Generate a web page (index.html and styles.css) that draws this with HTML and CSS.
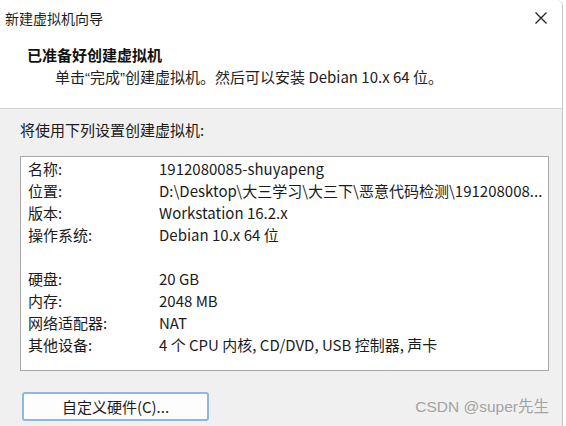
FILE: index.html
```html
<!DOCTYPE html>
<html lang="zh-CN">
<head>
<meta charset="utf-8">
<title>新建虚拟机向导</title>
<link rel="stylesheet" href="styles.css">
</head>
<body>
<div class="window">
  <div class="header">
    <div class="titlebar">
      <span class="title">新建虚拟机向导</span>
      <span class="close" aria-label="关闭">
        <svg width="14" height="14" viewBox="0 0 14 14"><path d="M1.5 1.5 L12.5 12.5 M12.5 1.5 L1.5 12.5" stroke="#222" stroke-width="1.3" fill="none"/></svg>
      </span>
    </div>
    <div class="heading">已准备好创建虚拟机</div>
    <div class="subheading">单击<span class="q">“</span>完成<span class="q">”</span>创建虚拟机。然后可以安装 Debian 10.x 64 位。</div>
  </div>
  <div class="content">
    <div class="intro">将使用下列设置创建虚拟机:</div>
    <div class="listbox">
      <div class="row"><span class="label">名称:</span><span class="value">1912080085-shuyapeng</span></div>
      <div class="row"><span class="label">位置:</span><span class="value">D:\Desktop\大三学习\大三下\恶意代码检测\191208008...</span></div>
      <div class="row"><span class="label">版本:</span><span class="value">Workstation 16.2.x</span></div>
      <div class="row"><span class="label">操作系统:</span><span class="value">Debian 10.x 64 位</span></div>
      <div class="row blank"></div>
      <div class="row"><span class="label">硬盘:</span><span class="value">20 GB</span></div>
      <div class="row"><span class="label">内存:</span><span class="value">2048 MB</span></div>
      <div class="row"><span class="label">网络适配器:</span><span class="value">NAT</span></div>
      <div class="row"><span class="label">其他设备:</span><span class="value">4 个 CPU 内核, CD/DVD, USB 控制器, 声卡</span></div>
    </div>
    <div class="footer">
      <button class="btn">自定义硬件(C)...</button>
      <span class="watermark">CSDN @super先生</span>
    </div>
  </div>
</div>
</body>
</html>
```

FILE: styles.css
```css
html, body {
  margin: 0;
  padding: 0;
  background: #ffffff;
}
body {
  width: 566px;
  height: 426px;
  overflow: hidden;
  font-family: "Noto Sans CJK SC", "Noto Sans", sans-serif;
  font-size: 15px;
  color: #1b1b1b;
}
.window {
  width: 563px;
  height: 426px;
  border-right: 1px solid #c4c4c4;
  border-top-right-radius: 6px;
  box-sizing: border-box;
  display: flex;
  flex-direction: column;
  overflow: hidden;
}
.header {
  flex: none;
  background: #ffffff;
  height: 109px;
  border-bottom: 1px solid #d4d4d4;
  box-sizing: border-box;
}
.titlebar {
  height: 36px;
  display: flex;
  align-items: center;
  justify-content: space-between;
  padding: 0 12px 0 5px;
}
.title {
  font-size: 14px;
  color: #1b1b1b;
}
.close {
  display: flex;
  width: 14px;
  height: 14px;
  margin-right: 2px;
}
.heading {
  font-weight: bold;
  font-size: 15px;
  padding-left: 27px;
  line-height: 22px;
  margin-top: 8px;
  color: #111;
}
.subheading {
  padding-left: 55px;
  line-height: 22px;
  color: #222;
}
.q {
  font-family: "Liberation Sans", Arial, sans-serif;
}
.content {
  flex: 1;
  background: #f0f0f0;
  padding: 0 13px 0 20px;
  display: flex;
  flex-direction: column;
}
.intro {
  line-height: 22px;
  margin-top: 10px;
}
.listbox {
  flex: none;
  margin-top: 15px;
  height: 215px;
  background: #ffffff;
  border: 1px solid #a9a9a9;
  box-sizing: border-box;
  padding: 1px 0 0 7px;
}
.row {
  display: flex;
  height: 22px;
  line-height: 22px;
  white-space: nowrap;
}
.label {
  width: 131px;
  flex: none;
}
.footer {
  display: flex;
  align-items: center;
  justify-content: space-between;
  margin-top: 21px;
}
.btn {
  width: 187px;
  height: 29px;
  margin-left: 2px;
  background: #fdfdfd;
  border: 2px solid #8cb8e3;
  border-radius: 3px;
  font-family: inherit;
  font-size: 15px;
  color: #1b1b1b;
  padding: 0;
}
.watermark {
  font-family: "Liberation Sans", Arial, "Noto Sans CJK SC", sans-serif;
  font-size: 15.5px;
  color: #a3a3a3;
  margin-top: -4px;
}
```
